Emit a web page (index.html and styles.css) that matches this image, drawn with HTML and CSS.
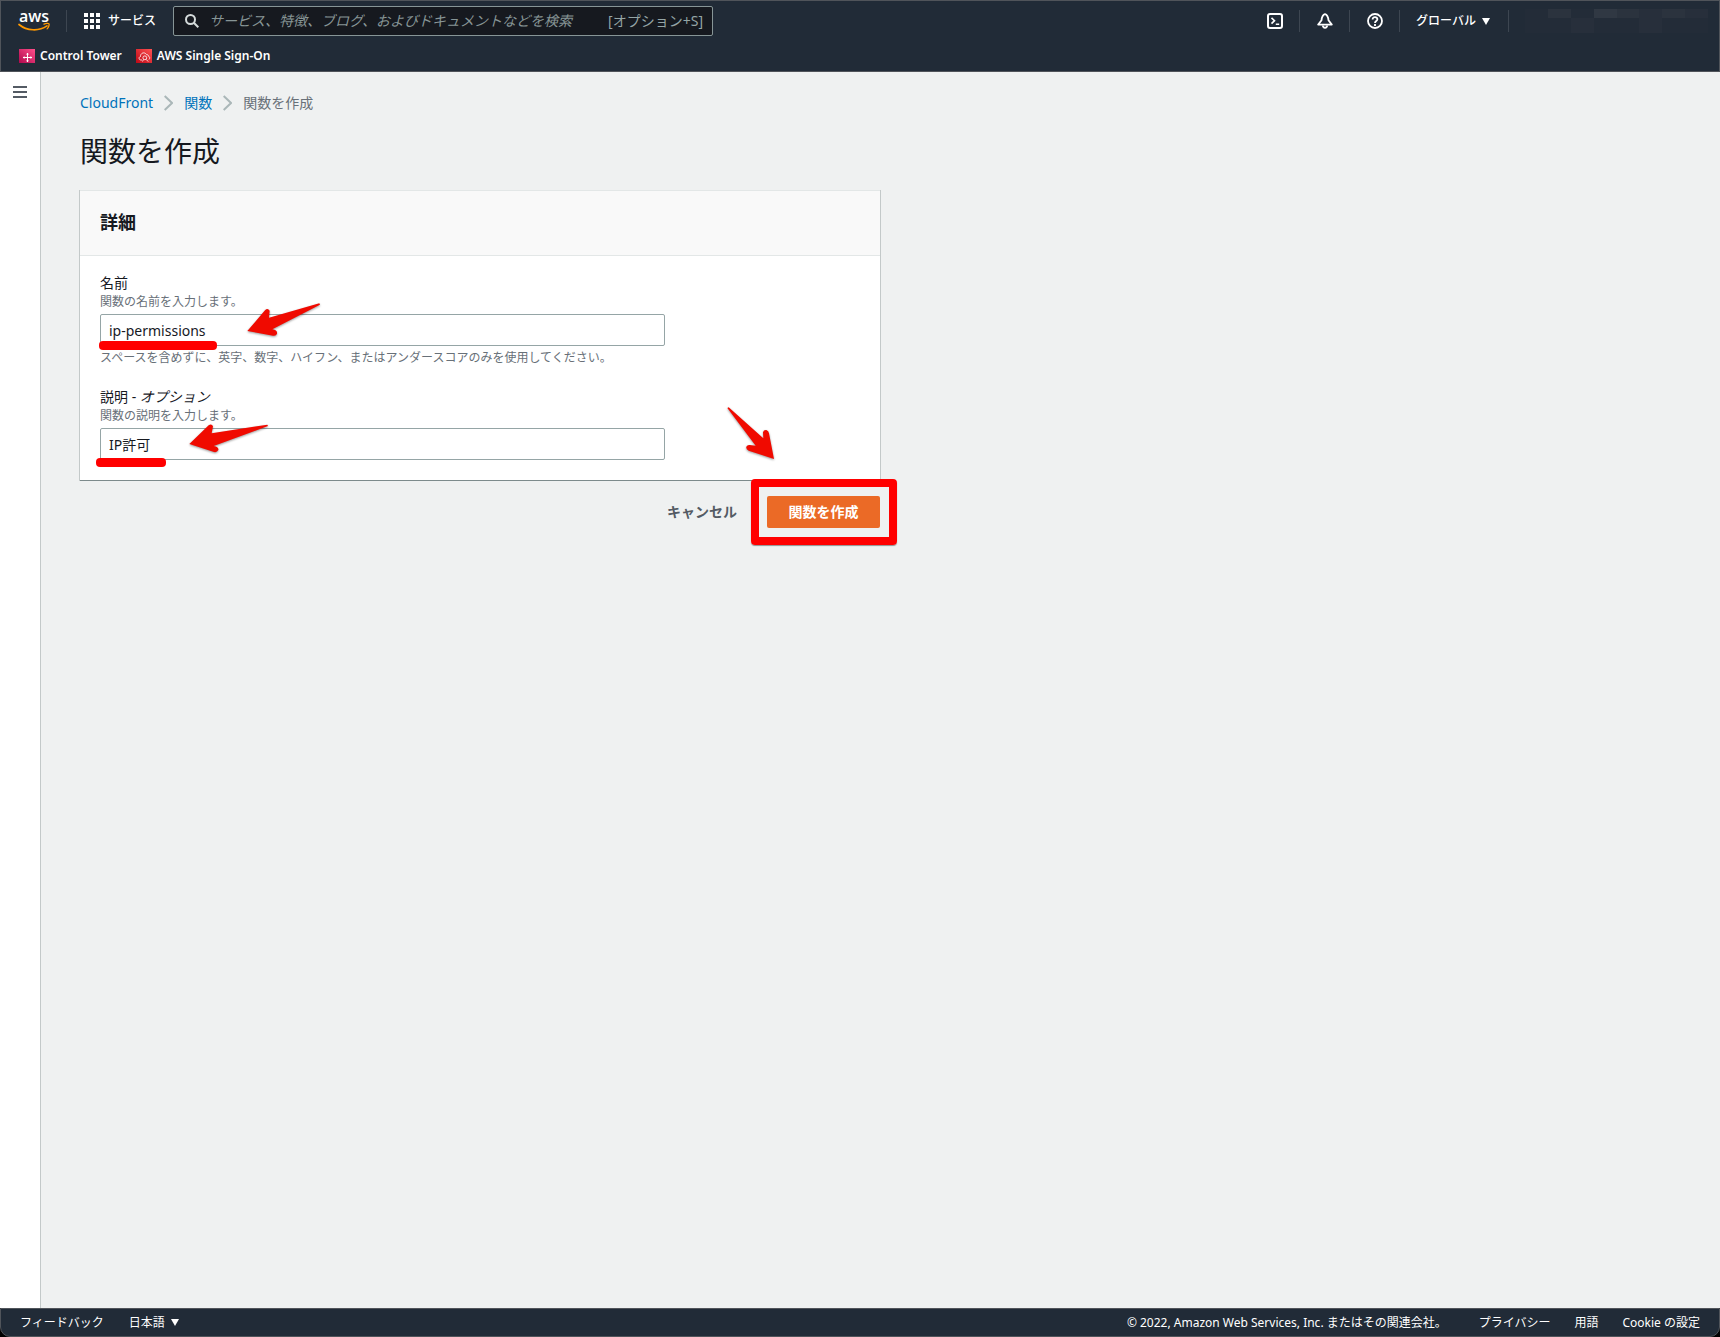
FILE: index.html
```html
<!DOCTYPE html>
<html lang="ja">
<head>
<meta charset="utf-8">
<title>関数を作成 - CloudFront</title>
<link rel="stylesheet" href="styles.css">
</head>
<body>
<header class="header">
  <div class="topbar">
    <a class="logo" href="#" aria-label="aws">
      <svg width="34" height="30" viewBox="0 0 34 30">
        <text x="1" y="16" class="logo-text">aws</text>
        <path d="M1 18.500c8 6.600 20 7 28 1.400" fill="none" stroke="#f90" stroke-width="1.700" stroke-linecap="round"/>
        <path d="M26 18.200c2-1 4.500-1 5-.3s-.2 3.400-1.900 5" fill="none" stroke="#f90" stroke-width="1.300" stroke-linecap="round"/>
      </svg>
    </a>
    <span class="divider"></span>
    <button class="services" type="button">
      <svg width="16" height="16" viewBox="0 0 16 16" fill="#fff"><path d="M0 0h4v4H0zM6 0h4v4H6zM12 0h4v4h-4zM0 6h4v4H0zM6 6h4v4H6zM12 6h4v4h-4zM0 12h4v4H0zM6 12h4v4H6zM12 12h4v4h-4z"/></svg>
      サービス
    </button>
    <label class="search">
      <svg width="14" height="14" viewBox="0 0 14 14" fill="none" stroke="#d5dbdb" stroke-width="2"><circle cx="5.500" cy="5.500" r="4.500"/><path d="M8.800 8.800l4.500 4.500"/></svg>
      <input type="search" aria-label="検索" placeholder="サービス、特徴、ブログ、およびドキュメントなどを検索">
      <span class="shortcut">[オプション+S]</span>
    </label>
    <nav class="tools">
      <button type="button" class="tool" aria-label="CloudShell">
        <svg width="16" height="16" viewBox="0 0 16 16" fill="none" stroke="#fff"><rect x="1" y="1" width="14" height="14" rx="2" stroke-width="2"/><path d="M4.500 4.800l3 2.900-3 2.900M8.800 11.200h3.400" stroke-width="1.600"/></svg>
      </button>
      <span class="divider"></span>
      <button type="button" class="tool" aria-label="通知">
        <svg width="16" height="16" viewBox="0 0 16 16" fill="none" stroke="#fff" stroke-width="1.800" stroke-linejoin="round"><path d="M8 1.200C5.500 2 4.800 4.500 4.500 7.300L1.200 11.600h13.600L11.500 7.300C11.200 4.500 10.500 2 8 1.200z"/><path d="M5.800 12.500c.2 3 4.200 3 4.400 0"/></svg>
      </button>
      <span class="divider"></span>
      <button type="button" class="tool" aria-label="ヘルプ">
        <svg width="16" height="16" viewBox="0 0 16 16" fill="none" stroke="#fff" stroke-width="1.800"><circle cx="8" cy="8" r="7"/><path d="M5.600 6.500c0-3.200 4.900-3 4.800-.2C10.300 8 8 7.900 8 9.900M8 11v1.900"/></svg>
      </button>
      <span class="divider"></span>
      <button type="button" class="region">グローバル
        <svg width="8" height="7" viewBox="0 0 8 7" fill="#fff"><path d="M0 0h8L4 7z"/></svg>
      </button>
      <span class="divider"></span>
      <div class="account">
        <i></i><i class="b"></i><i></i><i class="c"></i><i class="b"></i><i class="a"></i><i class="b"></i><i class="a"></i>
        <i></i><i></i><i class="a"></i><i></i><i></i><i class="a"></i><i></i><i></i>
      </div>
    </nav>
  </div>
  <nav class="favorites">
    <a href="#">
      <svg width="16" height="14" viewBox="0 0 16 14"><defs><linearGradient id="pink" x1="0" y1="1" x2="1" y2="0"><stop stop-color="#b0084d"/><stop offset="1" stop-color="#ff4f8b"/></linearGradient></defs><path d="M0 0h16v14H0z" fill="url(#pink)"/><g stroke="#fff" fill="none"><path d="M4 8.500h9M8.500 4v9"/><path d="M7.300 5.200h2.400M7.300 11.800h2.400M5.200 7.300v2.400M11.800 7.300v2.400" stroke-width=".8"/></g></svg>
      Control Tower
    </a>
    <a href="#">
      <svg width="16" height="14" viewBox="0 0 16 14"><defs><linearGradient id="red" x1="0" y1="1" x2="1" y2="0"><stop stop-color="#bd0816"/><stop offset="1" stop-color="#ff5252"/></linearGradient></defs><path d="M0 0h16v14H0z" fill="url(#red)"/><g stroke="#fff" stroke-width=".8" fill="none"><path d="M6 11H5C2.500 11 2.600 7.800 4.500 7.500 4.300 3.800 8.800 2.500 10.500 5.600c1.200-.3 1.800.5 1.800 1.500 1.700.4 1.700 2.500.7 3.400"/><circle cx="8.800" cy="8.800" r="1.900"/><path d="M10.200 10.400l2 2.200M7.500 10.500l-1 2"/></g></svg>
      AWS Single Sign-On
    </a>
  </nav>
</header>

<div class="body">
  <aside class="rail">
    <button type="button" aria-label="メニュー">
      <svg width="14" height="12" viewBox="0 0 14 12" fill="#545b64"><path d="M0 0h14v2H0zM0 5h14v2H0zM0 10h14v2H0z"/></svg>
    </button>
  </aside>
  <main class="content">
    <nav class="breadcrumb">
      <a href="#">CloudFront</a>
      <svg width="9" height="16" viewBox="0 0 9 16"><path d="M.7 1L8 8 .7 15"/></svg>
      <a href="#">関数</a>
      <svg width="9" height="16" viewBox="0 0 9 16"><path d="M.7 1L8 8 .7 15"/></svg>
      <span>関数を作成</span>
    </nav>
    <h1>関数を作成</h1>
    <form class="form">
      <section class="card">
        <h2>詳細</h2>
        <div class="fields">
          <div class="field">
            <label for="name">名前</label>
            <p class="hint">関数の名前を入力します。</p>
            <div class="control">
              <input id="name" type="text" value="ip-permissions">
              <span class="underline underline-name"></span>
              <svg class="arrow arrow-name" width="77" height="36" viewBox="495 126 231 108"><path d="M502 213L555 151Q563 143 569 152L567 173 718 130 720 134 577 208Q593 211 591 221 588 229 579 227Z"/></svg>
            </div>
            <p class="hint help">スペースを含めずに、英字、数字、ハイフン、またはアンダースコアのみを使用してください。</p>
          </div>
          <div class="field">
            <label for="desc">説明 - <em>オプション</em></label>
            <p class="hint">関数の説明を入力します。</p>
            <div class="control">
              <input id="desc" type="text" value="IP許可">
              <span class="underline underline-desc"></span>
              <svg class="arrow arrow-desc" width="83" height="30" viewBox="321 489 249 90"><path d="M328 552L386 496Q395 490 399 499L395 520 562 494 564 498 401 558Q417 561 415 570 411 578 402 576Z"/></svg>
            </div>
          </div>
        </div>
      </section>
      <div class="actions">
        <button type="button" class="cancel">キャンセル</button>
        <div class="submit-wrap">
          <button type="button" class="submit">関数を作成</button>
          <span class="frame"></span>
          <svg class="arrow arrow-submit" width="50" height="55" viewBox="258 78 150 165"><path d="M262 84L266 82 370 175 369 157Q371 149 379 150 386 152 387 160L402 237 326 212Q317 208 319 200 322 194 329 195L347 197Z"/></svg>
        </div>
      </div>
    </form>
  </main>
</div>

<footer class="footer">
  <div class="footer-group">
    <a href="#">フィードバック</a>
    <button type="button">日本語
      <svg width="8" height="7" viewBox="0 0 8 7" fill="#fff"><path d="M0 0h8L4 7z"/></svg>
    </button>
  </div>
  <div class="footer-group footer-legal">
    <span class="copyright">© 2022, Amazon Web Services, Inc. またはその関連会社。</span>
    <a href="#">プライバシー</a>
    <a href="#">用語</a>
    <a href="#">Cookie の設定</a>
  </div>
</footer>
</body>
</html>
```
FILE: styles.css
```css
* { box-sizing: border-box; }
body {
  margin: 0;
  min-height: 100vh;
  display: flex;
  flex-direction: column;
  background: #000;
  color: #16191f;
  font: 14px/22px "Noto Sans", "Noto Sans CJK JP", sans-serif;
}
h1, h2, p { margin: 0; }
a { color: inherit; text-decoration: none; }
svg { flex: none; display: block; }
button, input { font: inherit; color: inherit; }
button { background: none; border: 0; padding: 0; cursor: pointer; }

.header {
  height: 72px;
  background: #212b37;
  border: 1px solid #50545a;
  color: #fff;
  font-size: 12px;
}
.topbar { display: flex; align-items: center; height: 40px; padding: 0 11px 0 17px; }
.logo-text { font: 600 16px/16px "Open Sans", sans-serif; fill: #fff; }
.divider { width: 1px; height: 22px; background: #3d4651; }
.logo + .divider { margin-left: 14px; }
.services { display: flex; align-items: center; gap: 8px; margin: 0 17px; font-weight: 500; }
.search {
  display: flex;
  align-items: center;
  width: 540px;
  height: 30px;
  padding: 0 9px 0 11px;
  background: #16191f;
  border: 1px solid #879596;
  border-radius: 2px;
  color: #95a5a6;
  font-size: 14px;
}
.search input { flex: 1; min-width: 0; margin-left: 10px; padding: 0; background: none; border: 0; outline: 0; }
.search input::placeholder { color: #879596; font-style: italic; opacity: 1; }
.tools { display: flex; align-items: center; margin-left: auto; }
.tool { margin: 0 16px 0 17px; }
.region { display: flex; align-items: center; gap: 6px; margin: 0 18px 0 16px; font-weight: 500; }
.account { display: grid; grid-template-columns: repeat(8, 1fr); grid-template-rows: 9px 15px; width: 183px; margin-left: 16px; background: #232c38; }
.account .a { background: #272f3b; }
.account .b { background: #2b333e; }
.account .c { background: #303843; }

.favorites { display: flex; gap: 14px; padding: 4px 18px; font-weight: 600; }
.favorites a { display: flex; align-items: center; gap: 5px; }

.body { flex: 1; display: flex; background: #eff1f1; }
.rail { width: 41px; padding: 14px 13px; background: #fff; border-right: 1px solid #c3c9c9; }
.rail button { display: block; }
.content { flex: 1; padding: 20px 39px; }
.breadcrumb { display: flex; align-items: center; gap: 11px; color: #687078; }
.breadcrumb a { color: #0073bb; }
.breadcrumb path { fill: none; stroke: #aab7b8; stroke-width: 2; }
h1 { margin-top: 19px; font-size: 28px; line-height: 36px; font-weight: 400; }
.form { max-width: 800px; margin-top: 21px; }
.card { background: #fff; border: solid #e3e7e7; border-width: 1px 0; border-bottom-color: #7d8b8c; box-shadow: -1px 0 #c3c9c9, 1px 0 #c3c9c9; }
h2 { padding: 19px 20px 21px; background: #f9f9f9; border-bottom: 1px solid #e3e7e7; font-size: 18px; line-height: 24px; font-weight: 700; }
.fields { display: flex; flex-direction: column; gap: 20px; padding: 16px 20px 20px; }
.field label { display: block; }
.hint { color: #687078; font-size: 12px; line-height: 16px; }
.control { position: relative; max-width: 565px; margin-top: 4px; }
.control input { display: block; width: 100%; height: 32px; padding: 0 8px; background: #fff; border: 1px solid #95a5a6; border-radius: 2px; }
.help { margin-top: 4px; }
.actions { display: flex; justify-content: flex-end; align-items: center; gap: 30px; margin-top: 15px; }
.cancel { color: #545b64; font-weight: 700; }
.submit-wrap { position: relative; }
.submit { display: block; min-width: 113px; height: 32px; padding: 0 20px; background: #eb6a26; border-radius: 2px; color: #fff; font-weight: 700; }

.underline { position: absolute; height: 9px; border-radius: 4px; background: #f00; }
.underline-name { left: -1px; top: 27px; width: 118px; }
.underline-desc { left: -4px; top: 30px; width: 70px; }
.arrow { position: absolute; fill: #f00a00; filter: drop-shadow(0 1px 1px #0006); }
.arrow-name { left: 145px; top: -12px; }
.arrow-desc { left: 87px; top: -5px; }
.arrow-submit { right: 104px; top: -90px; }
.frame { position: absolute; inset: -17px -17px -17px -16px; border: 8px solid #f00; border-radius: 4px; box-shadow: 0 1px 1px #0006; pointer-events: none; }

.footer {
  display: flex;
  justify-content: space-between;
  align-items: center;
  height: 29px;
  padding: 0 19px;
  background: #212b37;
  border: 1px solid #50545a;
  border-radius: 0 0 10px 10px;
  color: #fff;
  font-size: 12px;
}
.footer-group { display: flex; gap: 25px; }
.footer-legal { gap: 24px; }
.copyright { margin-right: 8px; }
.footer button { display: flex; align-items: center; gap: 6px; }
```
